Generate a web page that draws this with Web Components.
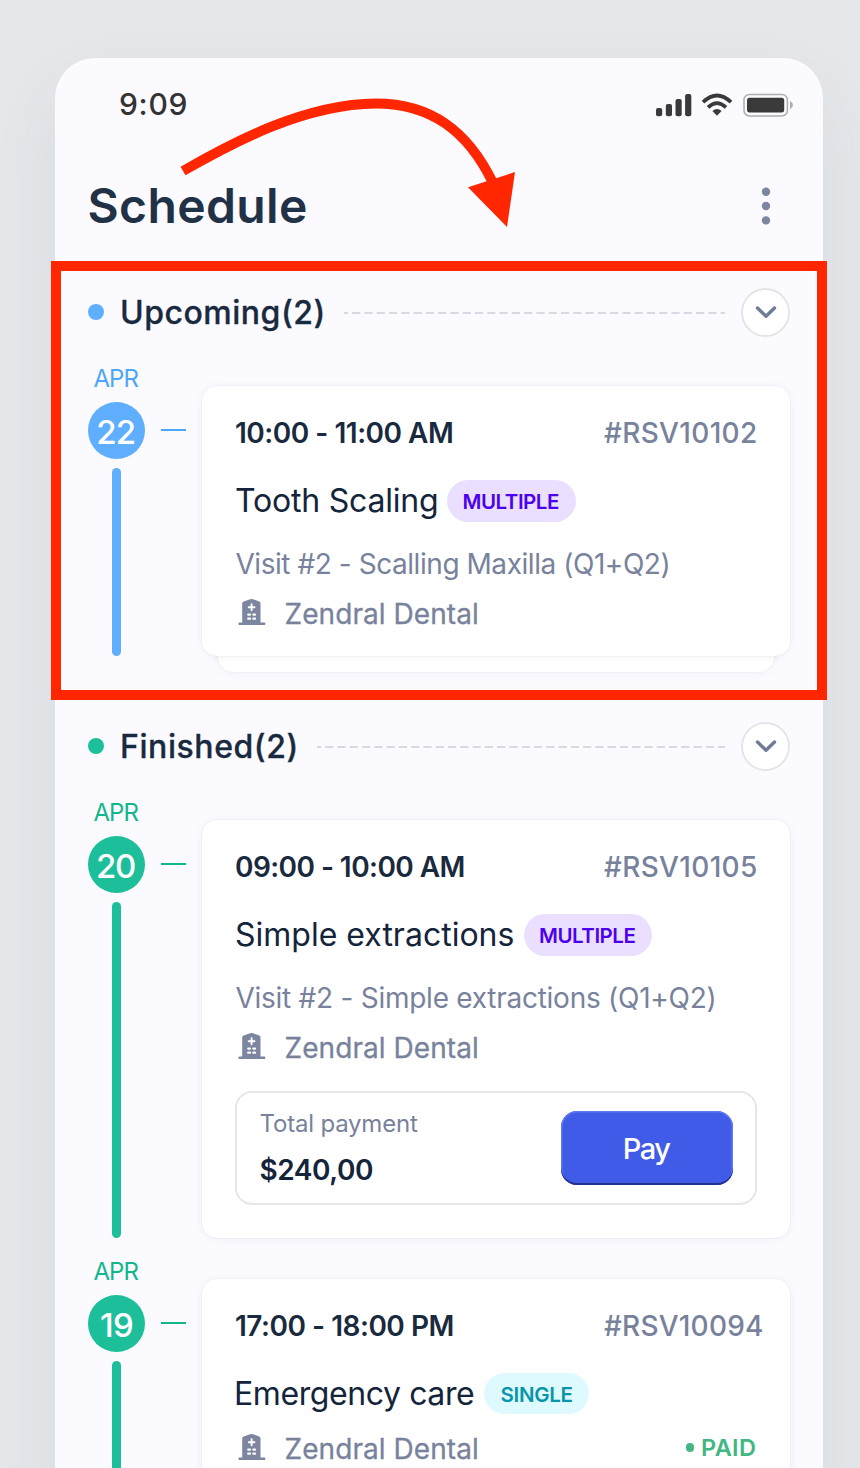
<!DOCTYPE html>
<html lang="en">
<head>
<meta charset="utf-8">
<title>Schedule</title>
<style>
  html, body { margin: 0; }
  body {
    display: flow-root;
    width: 860px; height: 1468px; overflow: hidden; position: relative;
    background: #e5e7eb;
    font-family: Inter, "Noto Sans", "Liberation Sans", sans-serif;
    color: #1a2a3e;
  }
</style>
</head>
<body>
<phone-screen>
  <status-bar></status-bar>
  <screen-header></screen-header>
  <schedule-section label="Upcoming(2)" label-width="200.5" tone="#60aeff" text-tone="#4ea6fa">
    <schedule-entry month="APR" day="22" day-width="36.5">
      <visit-card stacked time="10:00 - 11:00 AM" time-width="216" code="#RSV10102" code-width="152"
        name="Tooth Scaling" name-width="201" kind="MULTIPLE"
        note="Visit #2 - Scalling Maxilla (Q1+Q2)" note-width="433"></visit-card>
    </schedule-entry>
  </schedule-section>
  <schedule-section label="Finished(2)" label-width="173.5" tone="#1dbf9b" text-tone="#12b68d">
    <schedule-entry month="APR" day="20" day-width="37">
      <visit-card time="09:00 - 10:00 AM" time-width="227.5" code="#RSV10105" code-width="152"
        name="Simple extractions" name-width="277.5" kind="MULTIPLE"
        note="Visit #2 - Simple extractions (Q1+Q2)" note-width="479">
        <payment-box></payment-box>
      </visit-card>
    </schedule-entry>
    <schedule-entry month="APR" day="19" day-width="31">
      <visit-card open time="17:00 - 18:00 PM" time-width="216.5" code="#RSV10094" code-width="158"
        name="Emergency care" name-width="238" kind="SINGLE" paid></visit-card>
    </schedule-entry>
  </schedule-section>
</phone-screen>
<callout-marks></callout-marks>

<script>
const define = (name, render, after) => customElements.define(name, class extends HTMLElement {
  connectedCallback() {
    if (this.shadowRoot) return;
    const t = document.createElement('template');
    t.innerHTML = render(this);
    this.attachShadow({ mode: 'open' }).append(t.content.cloneNode(true));
    if (after) after(this);
  }
});
const a = (el, n) => el.getAttribute(n) || '';

/* A single line of text whose ink spans exactly the width in its w attribute. */
const pen = document.createElement('canvas').getContext('2d');
define('fit-text', () => `
  <style>
    :host { display: block; white-space: nowrap; flex: none; }
    span { display: inline-block; }
  </style><span><slot></slot></span>`, el => {
  const w = parseFloat(el.getAttribute('w'));
  const s = el.shadowRoot.querySelector('span');
  const cs = getComputedStyle(el);
  pen.font = `${cs.fontWeight} ${cs.fontSize} ${cs.fontFamily}`;
  const text = el.textContent;
  const m = pen.measureText(text);
  const ink = m.actualBoundingBoxLeft + m.actualBoundingBoxRight;
  el.style.width = w + 'px';
  s.style.letterSpacing = ((w - ink) / (text.length - 1)).toFixed(3) + 'px';
  s.style.marginLeft = m.actualBoundingBoxLeft.toFixed(2) + 'px';
});

define('phone-screen', () => `
  <style>
    :host {
      display: flex; flex-direction: column; box-sizing: border-box;
      width: 768px; height: 1480px; margin: 58px 0 0 55px; padding: 26px 33px 0;
      background: #fbfaff; border-radius: 40px 40px 0 0;
      box-shadow: 0 30px 70px rgba(60, 65, 75, .07);
    }
  </style><slot></slot>`);

define('status-bar', () => `
  <style>
    :host { display: flex; justify-content: space-between; align-items: center; height: 41px; padding: 0 0 0 32px; }
    fit-text { font-size: 30px; font-weight: 500; line-height: 43px; color: #333; }
    svg { display: block; margin-right: -5px; }
  </style>
  <fit-text w="66.5">9:09</fit-text>
  <svg width="140" height="28" viewBox="655 91 140 28">
    <g fill="#3a3a3a">
      <rect x="656" y="108" width="6.2" height="8.2" rx="2"/>
      <rect x="665.8" y="104" width="6.2" height="12.2" rx="2"/>
      <rect x="675.5" y="99" width="6.2" height="17.2" rx="2"/>
      <rect x="685.1" y="94" width="6.2" height="22.2" rx="2"/>
      <path d="M717 115.7 L712.4 111 Q717 107.2 721.6 111 Z"/>
    </g>
    <g fill="none" stroke="#3a3a3a" stroke-width="3.7">
      <path d="M703 102.1 Q717 88.8 731 102.1"/>
      <path d="M708 107.4 Q717 98.9 726 107.4"/>
    </g>
    <rect x="744" y="94.4" width="43.4" height="21.6" rx="5.5" fill="none" stroke="#aeaeb0" stroke-width="1.5"/>
    <rect x="747" y="97.8" width="37.2" height="14.6" rx="2.6" fill="#3a3a3a"/>
    <path d="M790 101 Q793 102.5 793 105 Q793 107.8 790 109.2 Z" fill="#aeaeb0"/>
  </svg>`);

define('screen-header', () => `
  <style>
    :host { display: flex; justify-content: space-between; align-items: center; height: 60px; margin-top: 51px; }
    fit-text { font-size: 48px; font-weight: 600; line-height: 62px; margin-left: 1.5px; color: #213247; }
    svg { display: block; margin-right: 15.5px; }
  </style>
  <fit-text w="216.5">Schedule</fit-text>
  <svg width="18" height="42" viewBox="0 0 18 42" fill="#7c86a0">
    <circle cx="9" cy="6.7" r="4.2"/><circle cx="9" cy="21" r="4.2"/><circle cx="9" cy="35.4" r="4.2"/>
  </svg>`);

define('schedule-section', el => `
  <style>
    :host { display: block; margin-top: 52px; --tone: ${a(el, 'tone')}; --text-tone: ${a(el, 'text-tone')}; }
    :host(:not(:first-of-type)) { margin-top: 66px; }
    .bar { display: flex; align-items: center; height: 48px; margin-bottom: 30px; }
    .dot { width: 16px; height: 16px; border-radius: 50%; background: var(--tone); margin-right: 18px; flex: none; }
    fit-text { font-size: 32px; font-weight: 500; line-height: 51px; margin-right: 1.5px; -webkit-text-stroke: .3px; }
    .rule { flex: 1; min-width: 0; height: 2px; margin: 1px 16px 0 20px; }
    .rule svg { display: block; width: 100%; height: 2px; }
    .toggle { display: grid; place-items: center; box-sizing: border-box; width: 49px; height: 49px; border-radius: 50%;
      background: #fff; border: 2px solid #e5e5e8; flex: none; }
  </style>
  <div class="bar">
    <span class="dot"></span>
    <fit-text w="${a(el, 'label-width')}">${a(el, 'label')}</fit-text>
    <span class="rule"><svg><line x1="0" y1="1" x2="100%" y2="1" stroke="#d8d9e3" stroke-width="2" stroke-dasharray="8.2 4.08" stroke-dashoffset="4.1"/></svg></span>
    <span class="toggle"><svg width="24" height="16" viewBox="0 0 24 16" fill="none" stroke="#707b97" stroke-width="3.4" stroke-linecap="round" stroke-linejoin="round"><path d="M3.5 4 L12 12.3 L20.5 4"/></svg></span>
  </div>
  <slot></slot>`);

define('schedule-entry', el => `
  <style>
    :host { display: grid; grid-template-columns: 57px 25px 588px; column-gap: 16px; }
    :host(:not(:first-of-type)) { margin-top: 21px; }
    .day { display: flex; flex-direction: column; align-items: center; }
    .month { font-size: 24px; line-height: 26px; height: 24px; margin-left: -1px; color: var(--text-tone); }
    .disc { display: grid; place-items: center; width: 57px; height: 57px; margin-top: 12px; border-radius: 50%;
      background: var(--tone); color: #fff; }
    .disc fit-text { font-size: 33px; font-weight: 500; line-height: 57px; margin-top: 2px; }
    .track { flex: 1; width: 8.5px; margin-top: 9px; border-radius: 5px; background: var(--tone); }
    .tick { height: 2px; margin-top: 63px; background: var(--text-tone); }
    .slot { margin-top: 20px; }
  </style>
  <div class="day">
    <fit-text class="month" w="45">${a(el, 'month')}</fit-text>
    <div class="disc"><fit-text w="${a(el, 'day-width')}">${a(el, 'day')}</fit-text></div>
    <div class="track"></div>
  </div>
  <div class="tick"></div>
  <div class="slot"><slot></slot></div>`);

define('kind-badge', el => {
  const multi = a(el, 'kind') === 'MULTIPLE';
  return `
  <style>
    :host { display: block; box-sizing: border-box; height: 41.5px; padding: 0 16.5px; border-radius: 21px;
      background: ${multi ? '#eadfff' : '#dffaff'}; color: ${multi ? '#4b00f0' : '#0895a8'}; }
    fit-text { font-size: 20.5px; font-weight: 600; line-height: 43px; }
  </style><fit-text w="${multi ? 95.5 : 72}">${a(el, 'kind')}</fit-text>`;
});

define('clinic-icon', () => `
  <style>:host { display: block; width: 28px; height: 28px; } svg { display: block; }</style>
  <svg width="28" height="28" viewBox="0 0 28 28">
    <path d="M4.2 24.5 V5.4 Q4.2 4 5.6 3.4 L12.1 1.2 Q13.5 .7 14.9 1.2 L21.2 3.4 Q22.5 4 22.5 5.4 V24.5 H26.5 Q27.4 24.6 27.4 25.7 Q27.4 27 26.5 27 H1.3 Q.4 27 .4 25.7 Q.4 24.6 1.3 24.5 Z" fill="#7c86a0"/>
    <g fill="none" stroke="#fff" stroke-linecap="round">
      <path d="M13.6 6.2 V12.2 M10.7 9.2 H16.5" stroke-width="1.9"/>
      <path d="M10.2 16.6 H12 M15.3 16.6 H17.1 M10.2 20.7 H12 M15.3 20.7 H17.1" stroke-width="2.2"/>
    </g>
  </svg>`);

define('visit-card', el => `
  <style>
    :host { display: block; position: relative; z-index: 0; }
    .card { box-sizing: border-box; padding: 26px 33px 24.5px 34px; background: #fff; border-radius: 15px;
      box-shadow: 0 0 0 1px rgba(70, 70, 110, .03), 0 1px 8px rgba(70, 70, 110, .06); }
    :host([open]) .card { min-height: 240px; }
    :host([stacked])::before { content: ""; position: absolute; z-index: -1; left: 16px; right: 16px; top: 40px; bottom: -16px;
      background: #fff; border-radius: 15px; box-shadow: 0 0 0 1px rgba(70, 70, 110, .03), 0 1px 8px rgba(70, 70, 110, .05); }
    .top { display: grid; grid-template-columns: 1fr 153px; height: 40px; }
    .top fit-text { font-size: 28px; line-height: 42px; font-weight: 600; }
    .top .code { font-weight: 500; color: #78829c; }
    .name { display: flex; align-items: center; gap: 10px; height: 42px; margin-top: 28px; }
    .name > fit-text { font-size: 32px; line-height: 44px; color: #14243a; }
    .note { font-size: 28px; line-height: 36px; margin: 24px 0 0 -.5px; color: #78829c; }
    .place { display: flex; align-items: center; height: 36px; margin-top: 13.5px; color: #78829c; }
    .name + .place { margin-top: 16px; }
    .place clinic-icon { margin: -3px 20px 0 1.5px; }
    .place > fit-text { font-size: 28px; line-height: 36px; -webkit-text-stroke: .3px; }
    .paid { display: flex; align-items: center; gap: 8px; margin: -2px 2px 0 auto; color: #42b683; }
    .paid i { width: 8.5px; height: 8.5px; margin-top: 0; border-radius: 50%; background: #42b683; }
    .paid fit-text { font-size: 23.5px; font-weight: 600; line-height: 34px; }
    ::slotted(payment-box) { margin: 25px 0 8.5px -1px; }
  </style>
  <div class="card">
    <div class="top"><fit-text w="${a(el, 'time-width')}">${a(el, 'time')}</fit-text><fit-text class="code" w="${a(el, 'code-width')}">${a(el, 'code')}</fit-text></div>
    <div class="name"><fit-text w="${a(el, 'name-width')}">${a(el, 'name')}</fit-text><kind-badge kind="${a(el, 'kind')}"></kind-badge></div>
    ${el.hasAttribute('note') ? `<fit-text class="note" w="${a(el, 'note-width')}">${a(el, 'note')}</fit-text>` : ''}
    <div class="place"><clinic-icon></clinic-icon><fit-text w="191.5">Zendral Dental</fit-text>
      ${el.hasAttribute('paid') ? '<div class="paid"><i></i><fit-text w="53">PAID</fit-text></div>' : ''}</div>
    <slot></slot>
  </div>`);

define('payment-box', () => `
  <style>
    :host { display: flex; justify-content: space-between; align-items: center; box-sizing: border-box; height: 114px;
      padding: 0 22px 0 23.5px; border: 2px solid #e6e7ea; border-radius: 17px; }
    .label { font-size: 24px; line-height: 32px; margin-top: 2px; color: #78829c; }
    .sum { font-size: 28px; font-weight: 600; line-height: 40px; margin-top: 10px; color: #14243a; }
    .pay { display: grid; place-items: center; width: 172px; height: 74px; border-radius: 16px; background: #405be8;
      box-shadow: inset 0 -2px 0 #22318f, inset 0 0 0 1.5px #6079f0; color: #fff; }
    .pay fit-text { font-size: 29px; font-weight: 500; line-height: 36px; margin: 3px 0 0 2px; }
  </style>
  <div><fit-text class="label" w="157.5">Total payment</fit-text><fit-text class="sum" w="112.5">$240,00</fit-text></div>
  <div class="pay"><fit-text w="46.5">Pay</fit-text></div>`);

define('callout-marks', () => `
  <style>:host { display: block; position: absolute; inset: 0; pointer-events: none; } svg { display: block; }</style>
  <svg width="860" height="1468" viewBox="0 0 860 1468">
    <rect x="56" y="266" width="766" height="429" fill="none" stroke="#ff2600" stroke-width="10"/>
    <path d="M183 171 C232 143 304 104 376 103.5 C431 103.5 468 131 493 183" fill="none" stroke="#ff2600" stroke-width="10"/>
    <path d="M468 187.3 L515 172 L507 227 Z" fill="#ff2600"/>
  </svg>`);
</script>
</body>
</html>
